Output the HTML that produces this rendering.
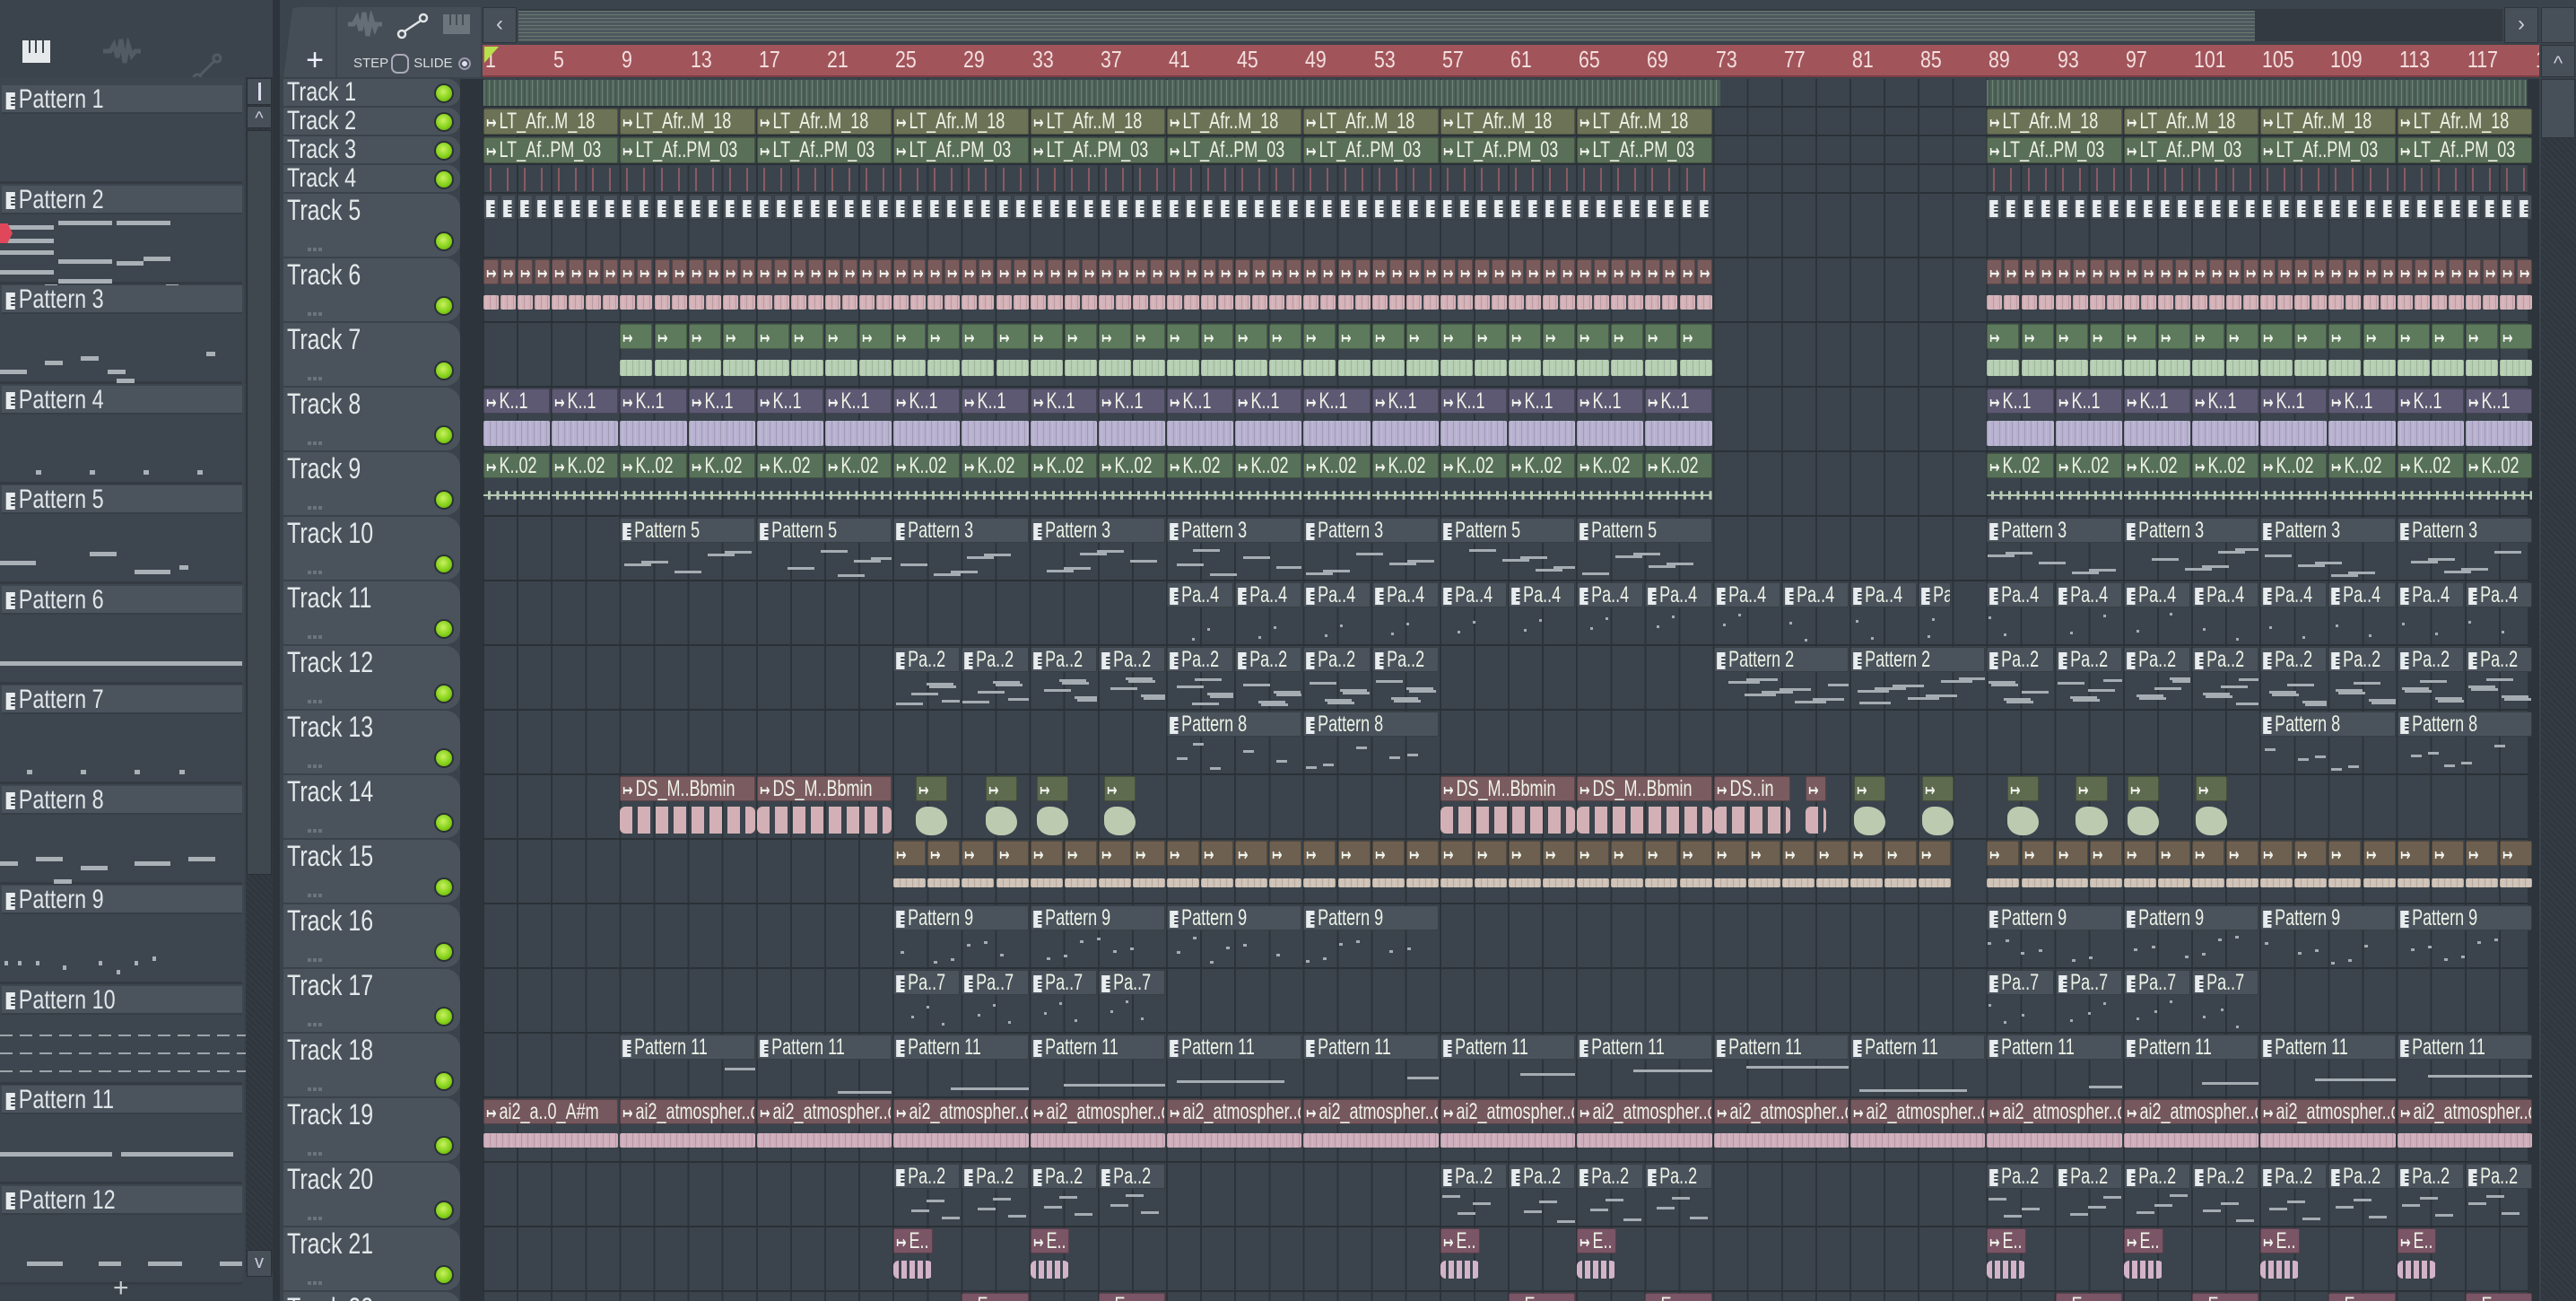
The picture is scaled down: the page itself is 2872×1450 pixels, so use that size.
<!DOCTYPE html>
<html><head><meta charset="utf-8">
<style>
*{box-sizing:border-box;margin:0;padding:0}
html,body{width:2872px;height:1450px;overflow:hidden}
body{background:#3a424b;font-family:"Liberation Sans",sans-serif}
#root{position:relative;width:2872px;height:1450px;overflow:hidden}
.a{position:absolute}
.t{color:#e3e8ea;white-space:nowrap;overflow:hidden;transform-origin:0 0}
.pi{display:inline-block;width:13px;height:19px;background:#e8ecee;vertical-align:middle;margin-right:5px;background-image:linear-gradient(#3d464f 0 0),linear-gradient(#3d464f 0 0),linear-gradient(#3d464f 0 0);background-size:6px 2px;background-position:7px 5px,7px 9px,7px 13px;background-repeat:no-repeat}
</style></head><body>
<div id="root"></div>
<script>
const R=document.getElementById('root');
function d(x,y,w,h,st,html){const e=document.createElement('div');e.className='a';e.style.cssText=`left:${x}px;top:${y}px;width:${w}px;height:${h}px;`+(st||'');if(html)e.innerHTML=html;R.appendChild(e);return e;}
const B=19.05,X0=538;const X=b=>X0+(b-1)*B;
const rt=n=>n<=4?88+32*(n-1):216+72*(n-5);const rh=n=>n<=4?32:72;
const SX=0.72;
d(0,0,2872,86,'background:#3b434c');
d(0,86,306,1364,'background:#3a424b');
d(25,45,31,25,'background:#e6e9eb;background-image:linear-gradient(90deg,transparent 7px,#3b434c 7px 9px,transparent 9px 14px,#3b434c 14px 16px,transparent 16px 22px,#3b434c 22px 24px,transparent 24px);background-size:100% 14px;background-repeat:no-repeat');
d(113,42,45,30,'','<svg width="45" height="30"><path d="M2 15 L10 15 L14 8 L18 22 L22 2 L26 28 L30 8 L34 20 L38 15 L44 15" stroke="#525b64" stroke-width="5" fill="none"/></svg>');
d(212,57,40,40,'','<svg width="40" height="40"><circle cx="8" cy="30" r="4" stroke="#525b64" stroke-width="3" fill="none"/><circle cx="30" cy="8" r="4" stroke="#525b64" stroke-width="3" fill="none"/><path d="M11 27 L27 11" stroke="#525b64" stroke-width="3"/></svg>');
d(0,86,272,1334,'background:#3d454e');
const pnotes=[[[50,185,14],[185,185,14]],[[0,10,60],[0,25,60],[65,5,60],[130,5,60],[0,38,60],[65,48,60],[130,50,30],[160,45,30],[0,60,60],[65,70,60]],[[0,60,30],[50,50,20],[120,60,20],[130,70,20],[90,45,20],[230,40,10]],[[40,60,6],[100,60,6],[160,60,6],[220,60,6]],[[0,50,40],[100,40,30],[150,60,40],[200,55,10]],[[0,50,270]],[[30,60,6],[90,60,6],[150,60,6],[200,60,6]],[[0,50,20],[40,45,30],[90,55,30],[150,50,40],[210,45,30],[60,70,20]],[[5,50,4],[20,50,4],[40,50,4],[70,55,4],[110,50,4],[130,60,4],[150,50,4],[170,45,4]],[[0,20,270],[0,40,270],[0,60,270]],[[0,40,125],[135,40,125]],[[30,50,40],[110,50,25],[165,50,38],[245,50,25]]];
for(let i=0;i<12;i++){const y=95+111.5*i;
 d(2,y,268,32,'background:#4b545d;border-bottom:2px solid #363e46','<div class="t" style="font-size:30px;line-height:32px;padding-left:6px;color:#e0e5e8;transform:scaleX(0.78);width:340px"><span class="pi"></span>Pattern '+(i+1)+'</div>');
 d(0,y+34,270,76,'background:#3d454e;border-bottom:3px solid #343b43');
 (pnotes[i]||[]).forEach(n=>{if(i==9){for(let k=0;k<270;k+=22)d(k,y+34+n[1],14,2,'background:#9ca4aa')}else d(n[0],y+34+n[1],n[2],5,'background:#a9b0b6')});
}
d(0,249,14,22,'background:#e0475b;clip-path:polygon(0 0,60% 0,100% 50%,60% 100%,0 100%)');
d(126,1428,16,16,'','<div style="color:#c8cdd0;font-size:30px;line-height:16px">+</div>');
d(274,86,30,1334,'background:#2f363d;background-image:repeating-linear-gradient(45deg,#343b42 0 2px,#2f363d 2px 5px)');
d(275,87,28,30,'background:#474f58;border:1px solid #2a3036','<div style="width:3px;height:20px;background:#dde;margin:4px auto"></div>');
d(275,118,28,25,'background:#474f58;border:1px solid #2a3036','<div style="color:#ccd;text-align:center;font-size:20px;line-height:26px">^</div>');
d(275,145,28,830,'background:#3f474f;border:1px solid #2a3036');
d(275,1393,28,30,'background:#474f58;border:1px solid #2a3036','<div style="color:#ccd;text-align:center;font-size:20px;line-height:26px">v</div>');
d(304,0,8,1450,'background:#2d343b');
d(316,8,58,78,'background:#454d56;border-radius:18px 0 0 0;clip-path:polygon(18% 0,100% 0,100% 100%,0 100%)','<div style="color:#eef;font-size:34px;text-align:center;line-height:34px;margin-top:42px;padding-left:12px">+</div>');
d(376,8,160,78,'background:#454d56');
d(386,12,40,30,'','<svg width="40" height="30"><path d="M2 15 L8 15 L12 8 L16 22 L20 2 L24 28 L28 8 L32 20 L34 15 L40 15" stroke="#656e77" stroke-width="5" fill="none"/></svg>');
d(442,14,36,30,'','<svg width="36" height="30"><circle cx="6" cy="24" r="4" stroke="#e0e4e6" stroke-width="2.5" fill="none"/><circle cx="30" cy="6" r="4" stroke="#e0e4e6" stroke-width="2.5" fill="none"/><path d="M9 21 L27 9" stroke="#e0e4e6" stroke-width="2.5"/></svg>');
d(494,16,30,22,'background:#6c747c;background-image:linear-gradient(90deg,transparent 7px,#454d56 7px 9px,transparent 9px 14px,#454d56 14px 16px,transparent 16px 21px,#454d56 21px 23px,transparent 23px);background-size:100% 12px;background-repeat:no-repeat');
d(394,60,140,22,'','<span style="color:#d8dde0;font-size:15px">STEP</span><span style="display:inline-block;width:20px;height:22px;border:2px solid #aab;border-radius:7px;vertical-align:middle;margin:0 5px 0 3px"></span><span style="color:#d8dde0;font-size:15px">SLIDE</span><span style="display:inline-block;width:14px;height:14px;border:2px solid #99a;border-radius:50%;vertical-align:middle;margin-left:6px;background:radial-gradient(#dde 0 3px,transparent 3px)"></span>');
d(538,8,38,40,'background:#474f58;border:1px solid #2d343a','<div style="color:#ccd;text-align:center;font-size:24px;line-height:36px">&lsaquo;</div>');
d(578,10,2212,36,'background:#333a42');
d(578,12,1936,34,'background:#4d575e;background-image:repeating-linear-gradient(#6a7a70 0 1px,transparent 1px 4px)');
d(2792,8,38,40,'background:#474f58;border:1px solid #2d343a','<div style="color:#ccd;text-align:center;font-size:24px;line-height:36px">&rsaquo;</div>');
d(2833,8,38,40,'background:#474f58;border:1px solid #2d343a');
d(538,50,2293,36,'background:#a1555b;border-bottom:2px solid #7d3e43');
let rl='';for(let b=1;b<=121;b+=4)rl+=`<div class="a" style="left:${X(b)-538+3}px;top:1px;font-size:26px;color:#f4dede;transform:scaleX(0.82);transform-origin:0 0">${b}</div>`;
d(538,50,2293,36,'overflow:hidden',rl);
d(540,52,16,18,'background:#b8e04a;clip-path:polygon(0 0,100% 0,0 100%)');
d(2833,88,39,1362,'background:#30373e;background-image:repeating-linear-gradient(45deg,#353c43 0 2px,#30373e 2px 5px)');
d(2833,50,38,36,'background:#474f58;border:1px solid #2d343a','<div style="color:#ccd;text-align:center;font-size:22px;line-height:40px">^</div>');
d(2833,88,38,66,'background:#474f58;border:1px solid #2d343a');
d(513,88,2318,1362,'background:#2d343b');
d(538,88,2280,1362,'background:#3b444d;background-image:repeating-linear-gradient(90deg,#2c3339 0 2px,transparent 2px 38.1px)');
for(let n=1;n<=22;n++){d(538,rt(n)+rh(n)-2,2280,2,'background:#2a3137');}
for(let n=1;n<=22;n++){const y=rt(n),h=rh(n);
 d(316,y,197,h-1,'background:#4a535c;border-radius:0 '+(h>40?'16px 16px':'14px 14px')+' 0;border-bottom:1px solid #3a4149');
 d(320,y+(h>40?1:-2),200,34,'',`<div class="t" style="font-size:${h>40?32:30}px;line-height:34px;transform:scaleX(0.78);width:230px">Track ${n}</div>`);
 const ly=h>40?y+42:y+5;
 d(484,ly,22,22,'border-radius:50%;background:radial-gradient(circle at 45% 40%,#c8f060,#86d21a 55%,#5c9a10);border:2px solid #2a3036');
 if(h>40)d(343,y+60,16,4,'background-image:linear-gradient(90deg,#6b747c 0 4px,transparent 4px 6px);background-size:6px 4px');
}
function clip(n,b,len,o){const y=rt(n)+1,h=rh(n)-3,x=X(b)+1,w=len*B-2;
 const big=h>40;const hh=big?28:h;
 const e=d(x,y,w,h,'overflow:hidden;border-radius:2px;');
 const hd=document.createElement('div');hd.className='a';hd.style.cssText=`left:0;top:0;width:${w}px;height:${hh}px;background:${o.c};border-radius:2px;border:1px solid rgba(0,0,0,.25);overflow:hidden;`;
 let ic=o.pat?'<span class="pi"></span>':'<span style="font-family:DejaVu Sans;font-size:19px;font-weight:bold;margin-right:4px;color:#f2f5ee">↦</span>';
 hd.innerHTML=`<div class="t" style="font-size:25px;line-height:${hh-2}px;padding-left:3px;color:#eef2e6;transform:scaleX(${SX});width:${w/SX+20}px">${ic}${o.l||''}</div>`;
 e.appendChild(hd);
 if(big&&o.w){const wv=document.createElement('div');wv.className='a';wv.style.cssText=`left:0;top:${o.wt||38}px;width:${w}px;height:${o.wh||22}px;`+o.w;e.appendChild(wv);}
 const nn=(o.nn===undefined)?3:o.nn;
 if(big&&o.pat){for(let k=0;k<nn;k++){const nv=document.createElement('div');nv.className='a';const nx=(k*37+b*13)%Math.max(w-20,10);nv.style.cssText=`left:${nx}px;top:${34+((k*11+b*7)%30)}px;width:${o.nw||Math.min(30,w/3)}px;height:3px;background:#a5adb3`;e.appendChild(nv);}}
 return e;}
function seq(n,a,b2,len,o){for(let b=a;b<b2-0.01;b+=len){const L=Math.min(len,b2-b);clip(n,b,L,o);}}
const R2=[[1,73],[89,121]];
const wf=c=>`background:${c};background-image:repeating-linear-gradient(90deg,rgba(0,0,0,.12) 0 1px,transparent 1px 3px,rgba(255,255,255,.1) 3px 4px,transparent 4px 7px);border-radius:2px;`;
const tex='background:#4e6258;background-image:repeating-linear-gradient(90deg,#6c8278 0 1px,transparent 1px 3px,#43554c 3px 4px,transparent 4px 6px)';
d(X(1)+1,89,X(73.4)-X(1),29,tex);
d(X(89)+1,89,X(121)-X(89)-8,29,tex);
R2.forEach(([a,b])=>{
 seq(2,a,b,8,{c:'#6c7256',l:'LT_Afr..M_18'});
 seq(3,a,b,8,{c:'#5a6f57',l:'LT_Af..PM_03'});
 for(let k=a;k<b;k++){d(X(k)+8,rt(4)+3,2,26,'background:#8a5a62');}
 seq(5,a,b,1,{c:'#48515a',pat:1,l:'',nn:0});
 seq(6,a,b,1,{c:'#7a5b5c',l:'',w:wf('#d4b2b8'),wt:40,wh:16});
 seq(8,a,b,4,{c:'#5e5973',l:'K..1',w:wf('#b8b2d0'),wt:36,wh:28});
 seq(9,a,b,4,{c:'#577158',l:'K..02',w:'background:linear-gradient(transparent 11px,#b5c9b3 11px 13px,transparent 13px),repeating-linear-gradient(90deg,transparent 0 5px,#b5c9b3 5px 8px,transparent 8px 9.5px);clip-path:polygon(0 30%,100% 30%,100% 70%,0 70%)',wt:35,wh:24});
});
seq(7,9,73,2,{c:'#5d7a5c',l:'',w:wf('#b6cfb3'),wt:40,wh:18});seq(7,89,121,2,{c:'#5d7a5c',l:'',w:wf('#b6cfb3'),wt:40,wh:18});
const P={c:'#4a535c',pat:1};
[[9,'Pattern 5'],[17,'Pattern 5'],[25,'Pattern 3'],[33,'Pattern 3'],[41,'Pattern 3'],[49,'Pattern 3'],[57,'Pattern 5'],[65,'Pattern 5'],[89,'Pattern 3'],[97,'Pattern 3'],[105,'Pattern 3'],[113,'Pattern 3']].forEach(([b,l])=>clip(10,b,8,Object.assign({l,nn:5},P)));
seq(11,41,87,4,Object.assign({l:'Pa..4',nn:2,nw:3},P));seq(11,89,121,4,Object.assign({l:'Pa..4',nn:2,nw:3},P));
seq(12,25,57,4,Object.assign({l:'Pa..2',nn:5,nw:30},P));clip(12,73,8,Object.assign({l:'Pattern 2',nn:8,nw:35},P));clip(12,81,8,Object.assign({l:'Pattern 2',nn:8,nw:35},P));seq(12,89,121,4,Object.assign({l:'Pa..2',nn:5,nw:30},P));
[41,49,105,113].forEach(b=>clip(13,b,8,Object.assign({l:'Pattern 8',nn:5,nw:12},P)));
const pk={c:'#7a5b60',w:'background:repeating-linear-gradient(90deg,#d2b0b5 0 14px,transparent 14px 20px);border-radius:6px',wt:34,wh:30};
const gs={c:'#5f6b4f',l:'',w:'background:#bccbb0;border-radius:40% 60% 50% 50%',wt:34,wh:32};
clip(14,9,8,Object.assign({l:'DS_M..Bbmin'},pk));clip(14,17,8,Object.assign({l:'DS_M..Bbmin'},pk));
[26.3,30.4,33.4,37.3,81.2,85.2,90.2,94.2,97.2,101.2].forEach(b=>clip(14,b,1.95,gs));
clip(14,57,8,Object.assign({l:'DS_M..Bbmin'},pk));clip(14,65,8,Object.assign({l:'DS_M..Bbmin'},pk));clip(14,73,4.6,Object.assign({l:'DS..in'},pk));clip(14,78.4,1.3,Object.assign({l:''},pk));
const br={c:'#6e6050',l:'',w:wf('#cfc2b6'),wt:42,wh:10};
seq(15,25,87,2,br);seq(15,89,121,2,br);
[25,33,41,49,89,97,105,113].forEach(b=>clip(16,b,8,Object.assign({l:'Pattern 9',nn:6,nw:4},P)));
[25,29,33,37,89,93,97,101].forEach(b=>clip(17,b,4,Object.assign({l:'Pa..7',nn:3,nw:3},P)));
for(let b=9;b<121;b+=8)clip(18,b,8,Object.assign({l:'Pattern 11',nn:1,nw:120},P));
const ai={c:'#75575e',w:wf('#cfaebb'),wt:38,wh:16};
clip(19,1,8,Object.assign({l:'ai2_a..0_A#m'},ai));for(let b=9;b<121;b+=8)clip(19,b,8,Object.assign({l:'ai2_atmospher..chine_70_A#m'},ai));
[[25,41],[57,73],[89,121]].forEach(([a,b])=>seq(20,a,b,4,Object.assign({l:'Pa..2',nn:3,nw:20},P)));
[25,33,57,65,89,97,105,113].forEach(b=>clip(21,b,2.4,{c:'#7a5566',l:'E.. ▸ ▸',w:'background:repeating-linear-gradient(90deg,#d3b3c8 0 6px,transparent 6px 9px);border-radius:6px',wt:36,wh:20}));
[29,37,61,69,93,101,109,117].forEach(b=>clip(22,b,4,{c:'#7a5566',l:'E..'}));
</script>
</body></html>
